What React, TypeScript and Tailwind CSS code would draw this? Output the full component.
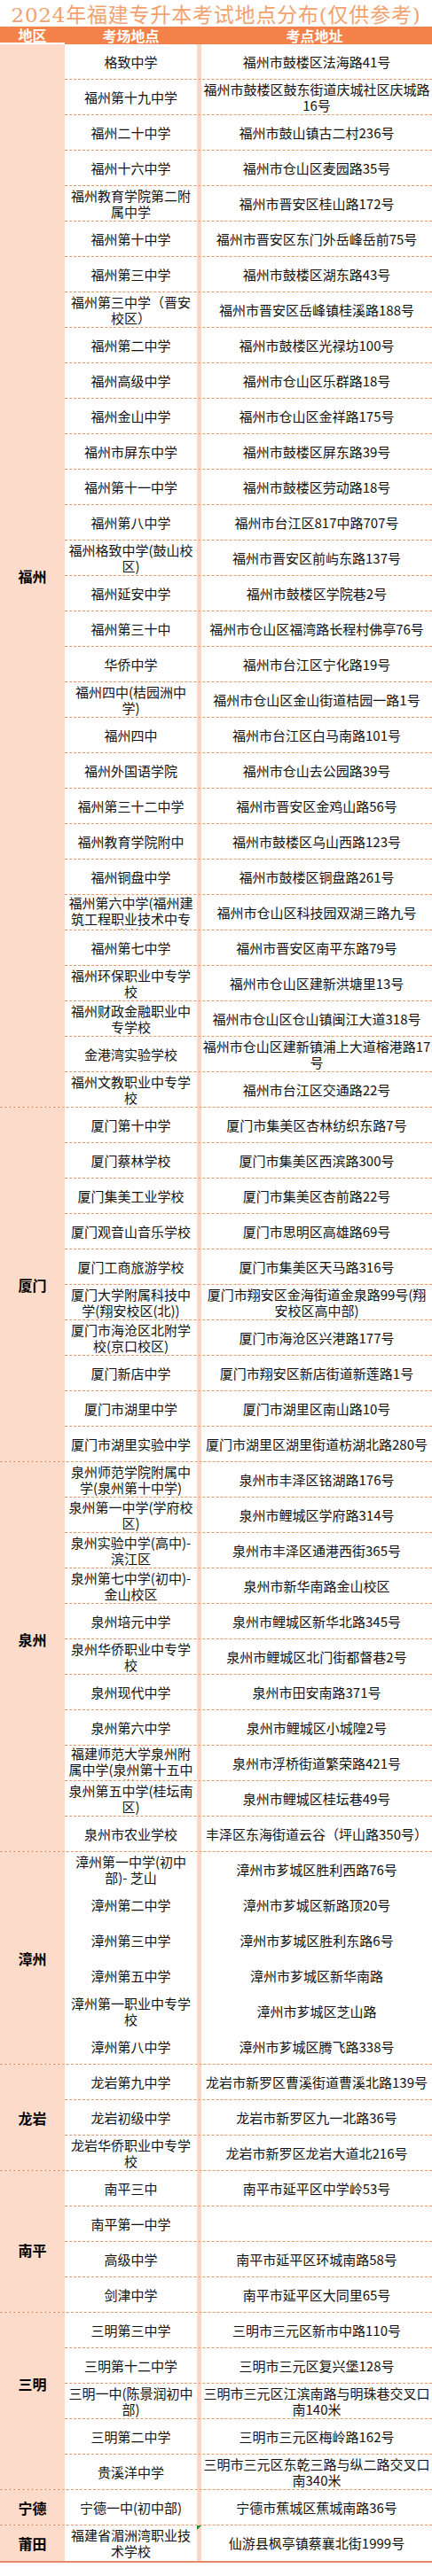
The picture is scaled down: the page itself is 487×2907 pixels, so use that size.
type Row = [string, string];

type Region = {
  name: string;
  rows: Row[];
  labelClass?: string;
  noLines?: boolean;
};

const regions: Region[] = [
  {
    name: "福州",
    rows: [
      ["格致中学", "福州市鼓楼区法海路41号"],
      ["福州第十九中学", "福州市鼓楼区鼓东街道庆城社区庆城路\n16号"],
      ["福州二十中学", "福州市鼓山镇古二村236号"],
      ["福州十六中学", "福州市仓山区麦园路35号"],
      ["福州教育学院第二附\n属中学", "福州市晋安区桂山路172号"],
      ["福州第十中学", "福州市晋安区东门外岳峰岳前75号"],
      ["福州第三中学", "福州市鼓楼区湖东路43号"],
      ["福州第三中学（晋安\n校区）", "福州市晋安区岳峰镇桂溪路188号"],
      ["福州第二中学", "福州市鼓楼区光禄坊100号"],
      ["福州高级中学", "福州市仓山区乐群路18号"],
      ["福州金山中学", "福州市仓山区金祥路175号"],
      ["福州市屏东中学", "福州市鼓楼区屏东路39号"],
      ["福州第十一中学", "福州市鼓楼区劳动路18号"],
      ["福州第八中学", "福州市台江区817中路707号"],
      ["福州格致中学(鼓山校\n区)", "福州市晋安区前屿东路137号"],
      ["福州延安中学", "福州市鼓楼区学院巷2号"],
      ["福州第三十中", "福州市仓山区福湾路长程村佛亭76号"],
      ["华侨中学", "福州市台江区宁化路19号"],
      ["福州四中(桔园洲中\n学)", "福州市仓山区金山街道桔园一路1号"],
      ["福州四中", "福州市台江区白马南路101号"],
      ["福州外国语学院", "福州市仓山去公园路39号"],
      ["福州第三十二中学", "福州市晋安区金鸡山路56号"],
      ["福州教育学院附中", "福州市鼓楼区乌山西路123号"],
      ["福州铜盘中学", "福州市鼓楼区铜盘路261号"],
      ["福州第六中学(福州建\n筑工程职业技术中专\n学校)", "福州市仓山区科技园双湖三路九号"],
      ["福州第七中学", "福州市晋安区南平东路79号"],
      ["福州环保职业中专学\n校", "福州市仓山区建新洪塘里13号"],
      ["福州财政金融职业中\n专学校", "福州市仓山区仓山镇闽江大道318号"],
      ["金港湾实验学校", "福州市仓山区建新镇浦上大道榕港路17\n号"],
      ["福州文教职业中专学\n校", "福州市台江区交通路22号"],
    ],
  },
  {
    name: "厦门",
    rows: [
      ["厦门第十中学", "厦门市集美区杏林纺织东路7号"],
      ["厦门蔡林学校", "厦门市集美区西滨路300号"],
      ["厦门集美工业学校", "厦门市集美区杏前路22号"],
      ["厦门观音山音乐学校", "厦门市思明区高雄路69号"],
      ["厦门工商旅游学校", "厦门市集美区天马路316号"],
      ["厦门大学附属科技中\n学(翔安校区(北))", "厦门市翔安区金海街道金泉路99号(翔\n安校区高中部)"],
      ["厦门市海沧区北附学\n校(京口校区)", "厦门市海沧区兴港路177号"],
      ["厦门新店中学", "厦门市翔安区新店街道新莲路1号"],
      ["厦门市湖里中学", "厦门市湖里区南山路10号"],
      ["厦门市湖里实验中学", "厦门市湖里区湖里街道枋湖北路280号"],
    ],
  },
  {
    name: "泉州",
    labelClass: "pb-10",
    rows: [
      ["泉州师范学院附属中\n学(泉州第十中学)", "泉州市丰泽区铭湖路176号"],
      ["泉州第一中学(学府校\n区)", "泉州市鲤城区学府路314号"],
      ["泉州实验中学(高中)-\n滨江区", "泉州市丰泽区通港西街365号"],
      ["泉州第七中学(初中)-\n金山校区", "泉州市新华南路金山校区"],
      ["泉州培元中学", "泉州市鲤城区新华北路345号"],
      ["泉州华侨职业中专学\n校", "泉州市鲤城区北门街都督巷2号"],
      ["泉州现代中学", "泉州市田安南路371号"],
      ["泉州第六中学", "泉州市鲤城区小城隍2号"],
      ["福建师范大学泉州附\n属中学(泉州第十五中\n学)", "泉州市浮桥街道繁荣路421号"],
      ["泉州第五中学(桂坛南\n区)", "泉州市鲤城区桂坛巷49号"],
      ["泉州市农业学校", "丰泽区东海街道云谷（坪山路350号）"],
    ],
  },
  {
    name: "漳州",
    noLines: true,
    rows: [
      ["漳州第一中学(初中\n部)- 芝山", "漳州市芗城区胜利西路76号"],
      ["漳州第二中学", "漳州市芗城区新路顶20号"],
      ["漳州第三中学", "漳州市芗城区胜利东路6号"],
      ["漳州第五中学", "漳州市芗城区新华南路"],
      ["漳州第一职业中专学\n校", "漳州市芗城区芝山路"],
      ["漳州第八中学", "漳州市芗城区腾飞路338号"],
    ],
  },
  {
    name: "龙岩",
    rows: [
      ["龙岩第九中学", "龙岩市新罗区曹溪街道曹溪北路139号"],
      ["龙岩初级中学", "龙岩市新罗区九一北路36号"],
      ["龙岩华侨职业中专学\n校", "龙岩市新罗区龙岩大道北216号"],
    ],
  },
  {
    name: "南平",
    labelClass: "pt-[18px]",
    rows: [
      ["南平三中", "南平市延平区中学岭53号"],
      ["南平第一中学", ""],
      ["高级中学", "南平市延平区环城南路58号"],
      ["剑津中学", "南平市延平区大同里65号"],
    ],
  },
  {
    name: "三明",
    labelClass: "pb-10",
    rows: [
      ["三明第三中学", "三明市三元区新市中路110号"],
      ["三明第十二中学", "三明市三元区复兴堡128号"],
      ["三明一中(陈景润初中\n部)", "三明市三元区江滨南路与明珠巷交叉口\n南140米"],
      ["三明第二中学", "三明市三元区梅岭路162号"],
      ["贵溪洋中学", "三明市三元区东乾三路与纵二路交叉口\n南340米"],
    ],
  },
  {
    name: "宁德",
    rows: [["宁德一中(初中部)", "宁德市蕉城区蕉城南路36号"]],
  },
  {
    name: "莆田",
    rows: [["福建省湄洲湾职业技\n术学校", "仙游县枫亭镇蔡襄北街1999号"]],
  },
];

function RegionBlock({ region, last }: { region: Region; last: boolean }) {
  const count = region.rows.length;
  return (
    <div
      className={
        last
          ? "flex border-b-2 border-[#e5896a]"
          : "flex border-b border-dashed border-[#ee9564]"
      }
    >
      <div
        className={`w-[73px] shrink-0 bg-[#fddbcb] flex items-center justify-center text-[16px] font-bold text-black ${region.labelClass ?? ""}`}
      >
        {region.name}
      </div>
      <div className="flex-1">
        {region.rows.map(([school, address], i) => {
          const isLast = i === count - 1;
          let rowClass = "flex h-10";
          if (isLast && !last) rowClass = "flex h-[39px]";
          else if (!isLast && !region.noLines)
            rowClass = "flex h-10 border-b border-dashed border-[#ee9564]";
          return (
            <div key={i} className={rowClass}>
              <div className="w-[149px] shrink-0 flex [align-items:safe_center] justify-center text-center overflow-hidden whitespace-pre-line leading-[18px]">
                <div>{school}</div>
              </div>
              <div className="relative w-[5px] shrink-0 bg-[#fcd6c6]">
                {last && (
                  <div className="absolute left-0 top-0 w-0 h-0 border-t-[5px] border-r-[5px] border-t-[#1f8a2f] border-r-transparent" />
                )}
              </div>
              <div className="flex-1 flex [align-items:safe_center] justify-center text-center overflow-hidden whitespace-pre-line leading-[18px]">
                <div>{address}</div>
              </div>
            </div>
          );
        })}
      </div>
    </div>
  );
}

export default function App() {
  return (
    <div className="w-[487px] min-h-[2907px] bg-white text-[15px] text-[#111] [font-family:'Noto_Sans_CJK_SC','Liberation_Sans',sans-serif]">
      <div className="h-[30px] pt-1 flex items-center justify-center text-[23px] leading-none tracking-[0.8px] text-[#f1a26f] [font-family:'DejaVu_Serif','Noto_Sans_CJK_SC',serif]">
        2024年福建专升本考试地点分布(仅供参考)
      </div>
      <div className="flex h-5 bg-[#f4824a] text-white font-bold text-[16px] leading-5">
        <div className="w-[73px] shrink-0 text-center border-b-2 border-white leading-[18px]">
          地区
        </div>
        <div className="w-[149px] shrink-0 text-center">考场地点</div>
        <div className="flex-1 text-center">考点地址</div>
      </div>
      {regions.map((region, i) => (
        <RegionBlock
          key={region.name}
          region={region}
          last={i === regions.length - 1}
        />
      ))}
    </div>
  );
}
